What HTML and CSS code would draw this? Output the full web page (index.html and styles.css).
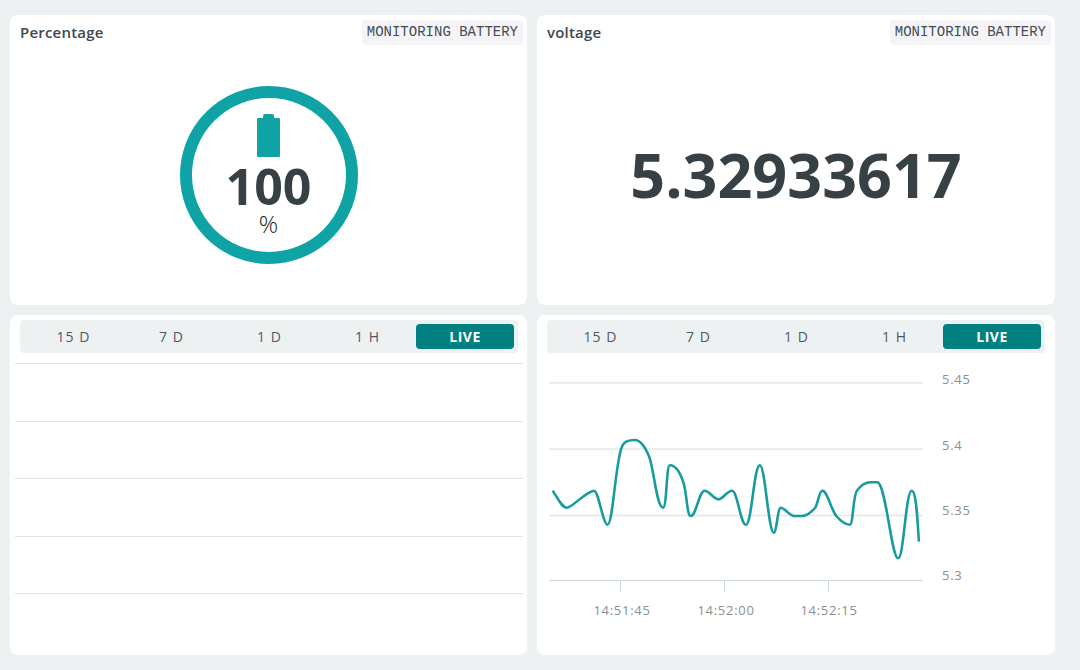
FILE: index.html
```html
<!DOCTYPE html>
<html lang="en">
<head>
<meta charset="utf-8">
<title>Monitoring Battery</title>
<link rel="stylesheet" href="styles.css">
</head>
<body>
<main class="dashboard">
  <section class="card">
    <header class="card-head">
      <h2 class="card-title">Percentage</h2>
      <span class="tag">MONITORING BATTERY</span>
    </header>
    <div class="card-body">
      <div class="gauge">
        <svg class="battery" width="23" height="43" viewBox="0 0 23 43" aria-hidden="true">
          <path fill="currentColor" d="M6 2a2 2 0 0 1 2-2h7a2 2 0 0 1 2 2v2h5a1 1 0 0 1 1 1v37a1 1 0 0 1-1 1H1a1 1 0 0 1-1-1V5a1 1 0 0 1 1-1h5z"/>
        </svg>
        <div class="gauge-value">100</div>
        <div class="gauge-unit">%</div>
      </div>
    </div>
  </section>

  <section class="card">
    <header class="card-head">
      <h2 class="card-title">voltage</h2>
      <span class="tag">MONITORING BATTERY</span>
    </header>
    <div class="card-body">
      <div class="big-value">5.32933617</div>
    </div>
  </section>

  <section class="card">
    <nav class="tabs">
      <span class="tab">15 D</span>
      <span class="tab">7 D</span>
      <span class="tab">1 D</span>
      <span class="tab">1 H</span>
      <span class="tab tab-active">LIVE</span>
    </nav>
    <div class="empty-chart">
      <div class="empty-row"></div>
      <div class="empty-row"></div>
      <div class="empty-row"></div>
      <div class="empty-row"></div>
      <div class="empty-row"></div>
    </div>
  </section>

  <section class="card">
    <nav class="tabs">
      <span class="tab">15 D</span>
      <span class="tab">7 D</span>
      <span class="tab">1 D</span>
      <span class="tab">1 H</span>
      <span class="tab tab-active">LIVE</span>
    </nav>
    <svg class="chart" width="518" height="302" viewBox="537 353 518 302">
      <g class="grid">
        <line x1="549" x2="923" y1="383" y2="383"/>
        <line x1="549" x2="923" y1="449" y2="449"/>
        <line x1="549" x2="923" y1="515.5" y2="515.5"/>
      </g>
      <g class="axis">
        <line x1="549" x2="923" y1="580.5" y2="580.5"/>
        <line x1="620.5" x2="620.5" y1="580" y2="592"/>
        <line x1="724.5" x2="724.5" y1="580" y2="592"/>
        <line x1="828.5" x2="828.5" y1="580" y2="592"/>
      </g>
      <path class="series" transform="matrix(1.0333 0 0 1 -17.98 0)" d="M552.3 490.7C556.9 498 561.4 507.7 566 507.7C571 507.7 585 491 592.3 490.7C596.6 490.7 601 524.7 605.3 524.7C610.5 524.7 612.5 468 618.7 448.3C621 441 626 440 631.7 440C637 440 641 445 645.7 456.7C650 468 653 507.7 659 507.7C663 507.7 662 465.3 665.7 465.3C670 465.3 675 470 679 483.3C682.5 495 682 516 686 516C691 516 694 490.7 699.3 490.7C704 490.7 708 499.3 712.7 499.3C717 499.3 721 490.7 726 490.7C731 490.7 734 524.7 739.3 524.7C745 524.7 747 465.3 752.7 465.3C758 465.3 761 532.7 766.3 532.7C769 532.7 770 507.7 773 507.7C777 507.7 781 516 786.3 516C788.6 516 791 516 793.3 516C798 516 802 513 806.3 507.7C809 504 810 490.7 813.3 490.7C818 490.7 821 508 826.7 516C831 521 835 524.7 840 524.7C843 524.7 843 495 846.7 490.7C850 486 855 482.3 860 482.3C862 482.3 864.5 482.3 866.7 482.3C875 485 880 558.3 886.7 558.3C892 558.3 894 490.7 899.7 490.7C904 490.7 905 515 906.7 541.7"/>
      <g class="y-labels">
        <text x="942" y="384">5.45</text>
        <text x="942" y="450">5.4</text>
        <text x="942" y="515">5.35</text>
        <text x="942" y="580">5.3</text>
      </g>
      <g class="x-labels">
        <text x="622" y="615">14:51:45</text>
        <text x="726" y="615">14:52:00</text>
        <text x="829" y="615">14:52:15</text>
      </g>
    </svg>
  </section>
</main>
</body>
</html>
```

FILE: styles.css
```css
* {
  box-sizing: border-box;
}

html,
body {
  margin: 0;
  height: 100%;
}

body {
  background: #edf1f2;
  font-family: "Open Sans", "Noto Sans", sans-serif;
  color: #374045;
  overflow: hidden;
}

.dashboard {
  display: grid;
  grid-template-columns: 517px 518px;
  grid-template-rows: 290px 340px;
  gap: 10px;
  padding: 15px 0 0 10px;
}

.card {
  display: flex;
  flex-direction: column;
  background: #fff;
  border-radius: 8px;
  overflow: hidden;
}

.card-head {
  display: flex;
  justify-content: space-between;
  align-items: flex-start;
  height: 30px;
  padding: 5px 4px 0 10px;
}

.card-title {
  margin: 0;
  padding-top: 1px;
  font-size: 15px;
  line-height: 22px;
  font-weight: 600;
  letter-spacing: 0.2px;
  color: #3f474c;
}

.tag {
  height: 25px;
  padding: 0 5px;
  background: #f4f4f6;
  border-radius: 4px;
  font-family: "Liberation Mono", monospace;
  font-size: 14px;
  line-height: 24px;
  color: #444a52;
}

.card-body {
  flex: 1;
  display: flex;
  align-items: center;
  justify-content: center;
}

.gauge {
  width: 178px;
  height: 178px;
  border: 12px solid #0fa3a6;
  border-radius: 50%;
  display: flex;
  flex-direction: column;
  align-items: center;
  padding-top: 16px;
}

.battery {
  display: block;
  color: #0fa3a6;
  flex: none;
}

.gauge-value {
  font-size: 50px;
  font-weight: 700;
  line-height: 50px;
  margin-top: 4px;
}

.gauge-unit {
  font-size: 24px;
  font-weight: 300;
  line-height: 24px;
  margin-top: 1px;
  color: #1f2528;
}

.big-value {
  font-size: 61px;
  font-weight: 700;
  line-height: 1;
  margin-top: -2px;
}

.tabs {
  display: grid;
  grid-template-columns: repeat(5, 98px);
  align-items: center;
  width: 498px;
  height: 33px;
  margin: 5px 0 0 10px;
  padding: 0 4px;
  background: #edf1f2;
  border-radius: 4px;
  flex: none;
}

.tab {
  text-align: center;
  font-size: 14px;
  line-height: 25px;
  letter-spacing: 1px;
  padding-left: 1px;
  color: #4f5a60;
}

.tab-active {
  background: #008080;
  color: #fff;
  font-weight: 700;
  border-radius: 4px;
  letter-spacing: 0.5px;
  padding-left: 0;
}

.empty-chart {
  margin: 10px 4px 0 5px;
}

.empty-row {
  height: 57.5px;
  border-top: 1px solid #dfe3e5;
}

.chart {
  display: block;
}

.grid line {
  stroke: #e3e7e8;
  stroke-width: 1.5;
}

.axis line {
  stroke: #ccd6de;
  stroke-width: 1;
}

.series {
  fill: none;
  stroke: #169c9f;
  stroke-width: 2.5;
}

.y-labels text,
.x-labels text {
  font-family: "Open Sans", sans-serif;
  font-size: 13px;
  letter-spacing: 0.7px;
  fill: #8a8f92;
}

.x-labels text {
  text-anchor: middle;
}
```
